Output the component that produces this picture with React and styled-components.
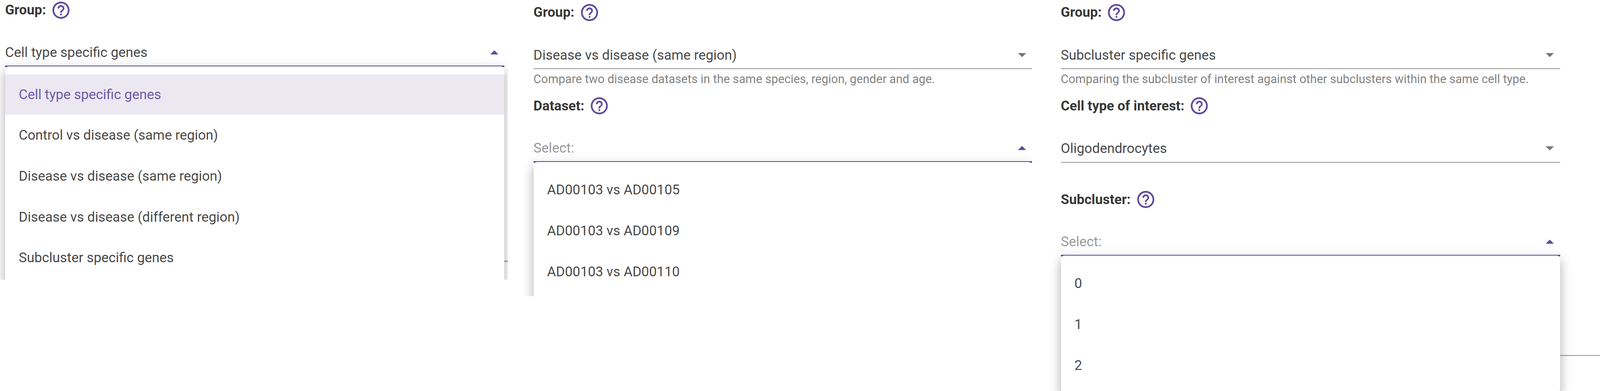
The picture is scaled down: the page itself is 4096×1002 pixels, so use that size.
import React from 'react';
import styled, { createGlobalStyle } from 'styled-components';

// all sizes below are measured on the 4694px reference, r() brings them to the 4096px window
const r = (v) => `${v * 0.8726}px`;

const purple = '#5f4b9b';

const GlobalStyle = createGlobalStyle`
  html, body {
    margin: 0;
    padding: 0;
    background: #fff;
    font-family: Roboto, "Liberation Sans", sans-serif;
  }
`;

const Page = styled.div`
  display: flex;
  align-items: flex-start;
  width: 100%;
  height: ${r(1148)};
  overflow: hidden;
`;

const Shot = styled.section`
  position: relative;
  flex: none;
  box-sizing: border-box;
  overflow: hidden;
  width: ${({ $width }) => r($width)};
  height: ${({ $height }) => r($height)};
  margin-left: ${({ $left }) => r($left)};
  padding: ${({ $top }) => r($top)} ${({ $right }) => r($right)} 0 ${({ $inset }) => r($inset)};
`;

const Field = styled.div`
  display: flex;
  flex-direction: column;
`;

const LabelRow = styled.div`
  display: flex;
  align-items: center;
  gap: ${r(14)};
  height: ${r(50)};
  margin-bottom: ${r(61.5)};
`;

const Label = styled.span`
  font-size: ${r(40)};
  font-weight: 700;
  color: rgba(0, 0, 0, 0.8);
`;

const Help = styled.svg`
  width: ${r(60)};
  height: ${r(60)};
  flex: none;
  fill: ${purple};
`;

const Select = styled.div`
  position: relative;
  display: flex;
  align-items: center;
  justify-content: space-between;
  box-sizing: border-box;
  height: ${({ $height }) => r($height || 80)};
  padding: 0 ${r(18)} 0 0;
  border-bottom: ${({ $open }) => ($open ? r(5) : r(2.5))} solid
    ${({ $open }) => ($open ? purple : '#949494')};
`;

const Value = styled.span`
  font-size: ${r(40)};
  color: ${({ $placeholder }) => ($placeholder ? 'rgba(0, 0, 0, 0.42)' : 'rgba(0, 0, 0, 0.74)')};
`;

const Arrow = styled.svg`
  width: ${r(24)};
  height: ${r(12)};
  fill: ${({ $open }) => ($open ? purple : 'rgba(0, 0, 0, 0.54)')};
`;

const Menu = styled.ul`
  position: absolute;
  z-index: 2;
  top: 100%;
  left: 0;
  right: 0;
  margin: ${r(2.5)} 0 0;
  padding: ${r(22.5)} 0 ${r(20)};
  list-style: none;
  background: #fff;
  border-radius: ${r(10)};
  box-shadow: 0 ${r(12.5)} ${r(12.5)} ${r(-7.5)} rgba(0, 0, 0, 0.2),
    0 ${r(20)} ${r(25)} ${r(2.5)} rgba(0, 0, 0, 0.14),
    0 ${r(7.5)} ${r(35)} ${r(5)} rgba(0, 0, 0, 0.12);
`;

const Item = styled.li`
  display: flex;
  align-items: center;
  height: ${r(120)};
  padding-left: ${r(40)};
  font-size: ${r(40)};
  color: ${({ $selected }) => ($selected ? '#6f5aa8' : 'rgba(0, 0, 0, 0.74)')};
  background: ${({ $selected }) => ($selected ? '#ebe8f2' : 'transparent')};
`;

const Helper = styled.p`
  box-sizing: border-box;
  height: ${r(83)};
  margin: 0;
  padding-top: ${r(5)};
  font-size: ${r(35)};
  line-height: ${r(50)};
  color: rgba(0, 0, 0, 0.5);
`;

const Spacer = styled.div`
  height: ${r(83.5)};
`;

const Rule = styled.div`
  height: ${r(2.5)};
  margin-top: ${({ $top }) => r($top)};
  margin-right: ${({ $bleed }) => r(-$bleed)};
  background: #949494;
`;

const HelpIcon = () => (
  <Help viewBox="0 0 24 24">
    <path d="M11 18h2v-2h-2v2zm1-16C6.48 2 2 6.48 2 12s4.48 10 10 10 10-4.48 10-10S17.52 2 12 2zm0 18c-4.41 0-8-3.59-8-8s3.59-8 8-8 8 3.59 8 8-3.59 8-8 8zm0-14c-2.21 0-4 1.79-4 4h2c0-1.1.9-2 2-2s2 .9 2 2c0 2-3 1.75-3 5h2c0-2.25 3-2.5 3-5 0-2.21-1.79-4-4-4z" />
  </Help>
);

const FormField = ({ label, value, placeholder, helper, options, selected, height }) => {
  const open = Boolean(options);
  return (
    <Field>
      <LabelRow>
        <Label>{label}</Label>
        <HelpIcon />
      </LabelRow>
      <Select $open={open} $height={height}>
        <Value $placeholder={placeholder}>{placeholder || value}</Value>
        <Arrow $open={open} viewBox="0 0 10 5">
          <path d={open ? 'M0 5 5 0l5 5z' : 'M0 0l5 5 5-5z'} />
        </Arrow>
        {open && (
          <Menu>
            {options.map((option) => (
              <Item key={option} $selected={option === selected}>
                {option}
              </Item>
            ))}
          </Menu>
        )}
      </Select>
      {helper ? <Helper>{helper}</Helper> : <Spacer />}
    </Field>
  );
};

const groups = [
  'Cell type specific genes',
  'Control vs disease (same region)',
  'Disease vs disease (same region)',
  'Disease vs disease (different region)',
  'Subcluster specific genes',
];

export default function App() {
  return (
    <Page>
      <GlobalStyle />
      <Shot $width={1490} $height={822} $left={0} $top={4.5} $right={10} $inset={15}>
        <FormField
          label="Group:"
          value="Cell type specific genes"
          options={groups}
          selected="Cell type specific genes"
          height={81}
        />
        <Rule $top={485.5} $bleed={10} />
      </Shot>
      <Shot $width={1495} $height={870} $left={43} $top={11.5} $right={0} $inset={32}>
        <FormField
          label="Group:"
          value="Disease vs disease (same region)"
          helper="Compare two disease datasets in the same species, region, gender and age."
        />
        <FormField
          label="Dataset:"
          placeholder="Select:"
          options={['AD00103 vs AD00105', 'AD00103 vs AD00109', 'AD00103 vs AD00110']}
        />
      </Shot>
      <Shot $width={1614} $height={1148} $left={52} $top={11.5} $right={117} $inset={32}>
        <FormField
          label="Group:"
          value="Subcluster specific genes"
          helper="Comparing the subcluster of interest against other subclusters within the same cell type."
        />
        <FormField label="Cell type of interest:" value="Oligodendrocytes" />
        <FormField label="Subcluster:" placeholder="Select:" options={['0', '1', '2']} />
        <Rule $top={207} $bleed={117} />
      </Shot>
    </Page>
  );
}
